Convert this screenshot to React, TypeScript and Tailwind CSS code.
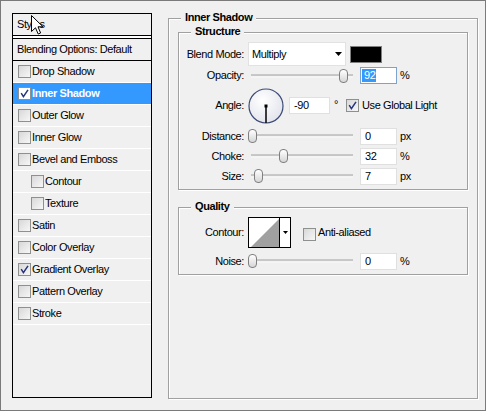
import React from "react";

const effects = [
  { label: "Drop Shadow" },
  { label: "Inner Shadow", checked: true, active: true },
  { label: "Outer Glow" },
  { label: "Inner Glow" },
  { label: "Bevel and Emboss" },
  { label: "Contour", indent: true },
  { label: "Texture", indent: true },
  { label: "Satin" },
  { label: "Color Overlay" },
  { label: "Gradient Overlay", checked: true },
  { label: "Pattern Overlay" },
  { label: "Stroke" },
];

function Box({ checked, hi }: { checked?: boolean; hi?: boolean }) {
  return (
    <span
      className={`flex h-[13px] w-[13px] shrink-0 items-center justify-center border border-[#8e8f8f] ${
        hi ? "bg-white" : "bg-linear-to-br from-[#d8d8d8] to-[#f7f7f7]"
      }`}
    >
      {checked && (
        <svg width="9" height="9" viewBox="0 0 9 9">
          <path d="M1.2 4.2 L3.4 7.6 L8 0.8" fill="none" stroke="#26357a" strokeWidth="1.5" />
        </svg>
      )}
    </span>
  );
}

function Slider({ at }: { at: string }) {
  return (
    <div className="relative h-full w-[107px] shrink-0">
      <div className="absolute left-[3px] right-[2px] top-1/2 h-[3px] -translate-y-1/2 border-t border-b border-t-[#a6a6a6] border-b-white bg-[#e6e6e6]" />
      <span
        className={`absolute top-1/2 h-[14px] w-[9px] -translate-y-1/2 rounded-[4px] border border-[#7f7f7f] bg-linear-to-b from-white to-[#d6d6d6] ${at}`}
      />
    </div>
  );
}

function Num({ value, selected }: { value: string; selected?: boolean }) {
  return (
    <div
      className={`flex h-[17px] w-[37px] shrink-0 items-center bg-white ${
        selected ? "border border-[#7da2ce] pl-[1px]" : "border border-[#e0e0e0] pl-[4px]"
      }`}
    >
      {selected ? <span className="bg-[#3399ff] pl-[2px] pr-[1px] text-white">{value}</span> : value}
    </div>
  );
}

function Label({ children }: { children: React.ReactNode }) {
  return <span className="w-[65px] shrink-0 text-right">{children}</span>;
}

function Group({ title, className, children }: { title: string; className: string; children?: React.ReactNode }) {
  return (
    <div className={`relative border border-[#a0a0a0] shadow-[1px_1px_0_#fff,inset_1px_1px_0_#fff] ${className}`}>
      <span className="absolute left-[12px] top-[-8px] bg-[#f0f0f0] px-[4px] font-bold">{title}</span>
      {children}
    </div>
  );
}

function SliderRow({ label, at, value, unit, selected }: { label: string; at: string; value: string; unit: string; selected?: boolean }) {
  return (
    <div className="flex h-[20px] items-center">
      <Label>{label}</Label>
      <div className="ml-[4px] flex h-full items-center">
        <Slider at={at} />
      </div>
      <div className="ml-[5px]">
        <Num value={value} selected={selected} />
      </div>
      <span className="ml-[3px]">{unit}</span>
    </div>
  );
}

export default function App() {
  return (
    <div className="relative flex h-[411px] w-[486px] items-start border border-[#7a7a7a] bg-[#f0f0f0] pl-[11px] pt-[12px] font-['Liberation_Sans',Arial,sans-serif] text-[11px] leading-[13px] tracking-[-0.4px] text-black">
      {/* Styles list */}
      <div className="flex h-[385px] w-[140px] shrink-0 flex-col border border-black">
        <div className="flex h-[22px] items-center border-b border-black pl-[4px]">Styles</div>
        <div className="h-[2px] bg-white" />
        <div className="flex h-[23px] items-center border-y border-black pl-[4px]">Blending Options: Default</div>
        {effects.map((e) => (
          <div
            key={e.label}
            className={`flex h-[22px] items-center border-b border-white ${e.indent ? "pl-[18px]" : "pl-[5px]"} ${
              e.active ? "bg-[#3399ff] font-bold text-white" : ""
            }`}
          >
            <Box checked={e.checked} hi={e.active} />
            <span className="ml-[1px]">{e.label}</span>
          </div>
        ))}
      </div>

      {/* Inner Shadow settings */}
      <Group title="Inner Shadow" className="ml-[16px] mt-[5px] h-[381px] w-[310px]">
        <Group title="Structure" className="ml-[9px] mt-[13px] h-[158px] w-[290px]">
          <div className="mt-[9px] flex h-[24px] items-center">
            <Label>Blend Mode:</Label>
            <div className="ml-[4px] flex h-[24px] w-[98px] items-center border border-[#e2e2e2] bg-white pl-[3px]">
              Multiply
              <svg className="ml-auto mr-[3px]" width="7" height="4" viewBox="0 0 7 4">
                <path d="M0 0 H7 L3.5 4 Z" fill="#000" />
              </svg>
            </div>
            <div className="ml-[4px] h-[17px] w-[32px] border border-[#808080] bg-black" />
          </div>
          <div className="flex h-[19px] items-center">
            <Label>Opacity:</Label>
            <div className="ml-[4px] flex h-full items-center">
              <Slider at="left-[91px]" />
            </div>
            <div className="ml-[5px]">
              <Num value="92" selected />
            </div>
            <span className="ml-[3px]">%</span>
          </div>
          <div className="flex h-[41px] items-center">
            <Label>Angle:</Label>
            <svg className="ml-[4px] shrink-0" width="36" height="36" viewBox="0 0 36 36">
              <defs>
                <radialGradient id="dial" cx="40%" cy="35%" r="70%">
                  <stop offset="0" stopColor="#ffffff" />
                  <stop offset="1" stopColor="#e2e4ec" />
                </radialGradient>
              </defs>
              <circle cx="18" cy="18" r="17" fill="url(#dial)" stroke="#3c4a78" strokeWidth="1.2" />
              <line x1="18" y1="18" x2="18" y2="35" stroke="#000" strokeWidth="1.5" />
              <rect x="16.5" y="16.5" width="3" height="3" fill="#000" />
            </svg>
            <div className="ml-[5px] flex h-[17px] w-[41px] items-center border border-[#e0e0e0] bg-white pl-[4px]">-90</div>
            <span className="ml-[4px] w-[12px] self-start pt-[13px]">°</span>
            <Box checked />
            <span className="ml-[3px]">Use Global Light</span>
          </div>
          <SliderRow label="Distance:" at="left-0" value="0" unit="px" />
          <SliderRow label="Choke:" at="left-[31px]" value="32" unit="%" />
          <SliderRow label="Size:" at="left-[6px]" value="7" unit="px" />
        </Group>

        <Group title="Quality" className="ml-[9px] mt-[17px] h-[68px] w-[290px]">
          <div className="mt-[9px] flex h-[31px] items-center">
            <Label>Contour:</Label>
            <div className="ml-[4px] flex h-[31px] w-[43px] border border-black bg-white">
              <svg className="shrink-0" width="30" height="29" viewBox="0 0 30 29">
                <path d="M2 29 L30 1 L30 29 Z" fill="#a0a0a0" />
              </svg>
              <div className="flex flex-1 items-center justify-center border-l border-black">
                <svg width="5" height="3" viewBox="0 0 5 3">
                  <path d="M0 0 H5 L2.5 3 Z" fill="#000" />
                </svg>
              </div>
            </div>
            <div className="ml-[12px] mt-[3px]">
              <Box />
            </div>
            <span className="ml-[2px]">Anti-aliased</span>
          </div>
          <div className="mt-[3px]">
            <SliderRow label="Noise:" at="left-0" value="0" unit="%" />
          </div>
        </Group>
      </Group>

      {/* mouse pointer over the list header */}
      <svg className="absolute left-[30px] top-[14px]" width="13" height="20" viewBox="0 0 13 20">
        <path d="M0.5 0.5 L0.5 16.5 L4.5 12.8 L7.2 19 L9.6 18 L7 11.8 L12 11.8 Z" fill="#fff" stroke="#000" strokeWidth="1" />
      </svg>
    </div>
  );
}
